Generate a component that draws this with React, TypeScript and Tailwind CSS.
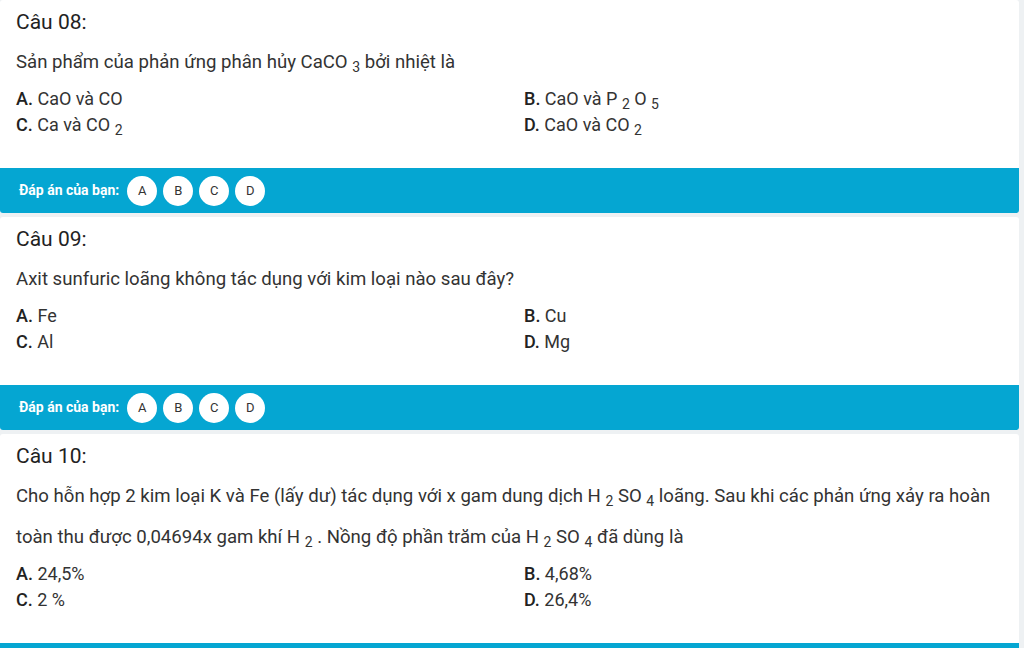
import React from 'react';

type Option = { key: string; body: React.ReactNode };

interface QuestionProps {
  num: string;
  text: React.ReactNode;
  options: Option[];
}

const Sub = ({ children }: { children: React.ReactNode }) => (
  <>
    {' '}
    <sub className="text-[14px]">{children}</sub>
  </>
);

function Question({ num, text, options }: QuestionProps) {
  return (
    <div className="bg-white rounded-[3px] w-[1019px]">
      <div className="pl-4 pr-4 pt-2">
        <div className="text-[21px] leading-[28px] text-[#222]">Câu {num}:</div>
        <div className="mt-[6px] text-[18.6px] leading-[41px] text-[#333]">{text}</div>
        <div className="mt-[3px] mb-[30px] grid grid-cols-[508px_1fr] text-[18px] leading-[26px] text-[#333]">
          {options.map((o) => (
            <div key={o.key}>
              <span className="font-medium text-[#222]">{o.key}.</span> {o.body}
            </div>
          ))}
        </div>
      </div>
      <div className="h-[45px] bg-[#05a6d2] rounded-b-[3px] flex items-center pl-[19px]">
        <span className="text-white font-bold text-[14px] mr-[8px]">Đáp án của bạn:</span>
        <div className="flex gap-[6px]">
          {['A', 'B', 'C', 'D'].map((l) => (
            <div
              key={l}
              className="w-[30px] h-[30px] rounded-full bg-white flex items-center justify-center text-[13px] text-[#333]"
            >
              {l}
            </div>
          ))}
        </div>
      </div>
    </div>
  );
}

export default function App() {
  return (
    <div
      className="bg-[#eef1f3] flex flex-col gap-[4px] overflow-hidden h-[648px]"
      style={{ fontFamily: 'Roboto, "Noto Sans", sans-serif' }}
    >
      <Question
        num="08"
        text={
          <>
            Sản phẩm của phản ứng phân hủy CaCO<Sub>3</Sub> bởi nhiệt là
          </>
        }
        options={[
          { key: 'A', body: 'CaO và CO' },
          { key: 'B', body: <>CaO và P<Sub>2</Sub> O<Sub>5</Sub></> },
          { key: 'C', body: <>Ca và CO<Sub>2</Sub></> },
          { key: 'D', body: <>CaO và CO<Sub>2</Sub></> },
        ]}
      />
      <Question
        num="09"
        text="Axit sunfuric loãng không tác dụng với kim loại nào sau đây?"
        options={[
          { key: 'A', body: 'Fe' },
          { key: 'B', body: 'Cu' },
          { key: 'C', body: 'Al' },
          { key: 'D', body: 'Mg' },
        ]}
      />
      <Question
        num="10"
        text={
          <>
            Cho hỗn hợp 2 kim loại K và Fe (lấy dư) tác dụng với x gam dung dịch H<Sub>2</Sub> SO<Sub>4</Sub> loãng. Sau khi các phản ứng xảy ra hoàn toàn thu được 0,04694x gam khí H<Sub>2</Sub> . Nồng độ phần trăm của H<Sub>2</Sub> SO<Sub>4</Sub> đã dùng là
          </>
        }
        options={[
          { key: 'A', body: '24,5%' },
          { key: 'B', body: '4,68%' },
          { key: 'C', body: '2 %' },
          { key: 'D', body: '26,4%' },
        ]}
      />
    </div>
  );
}
